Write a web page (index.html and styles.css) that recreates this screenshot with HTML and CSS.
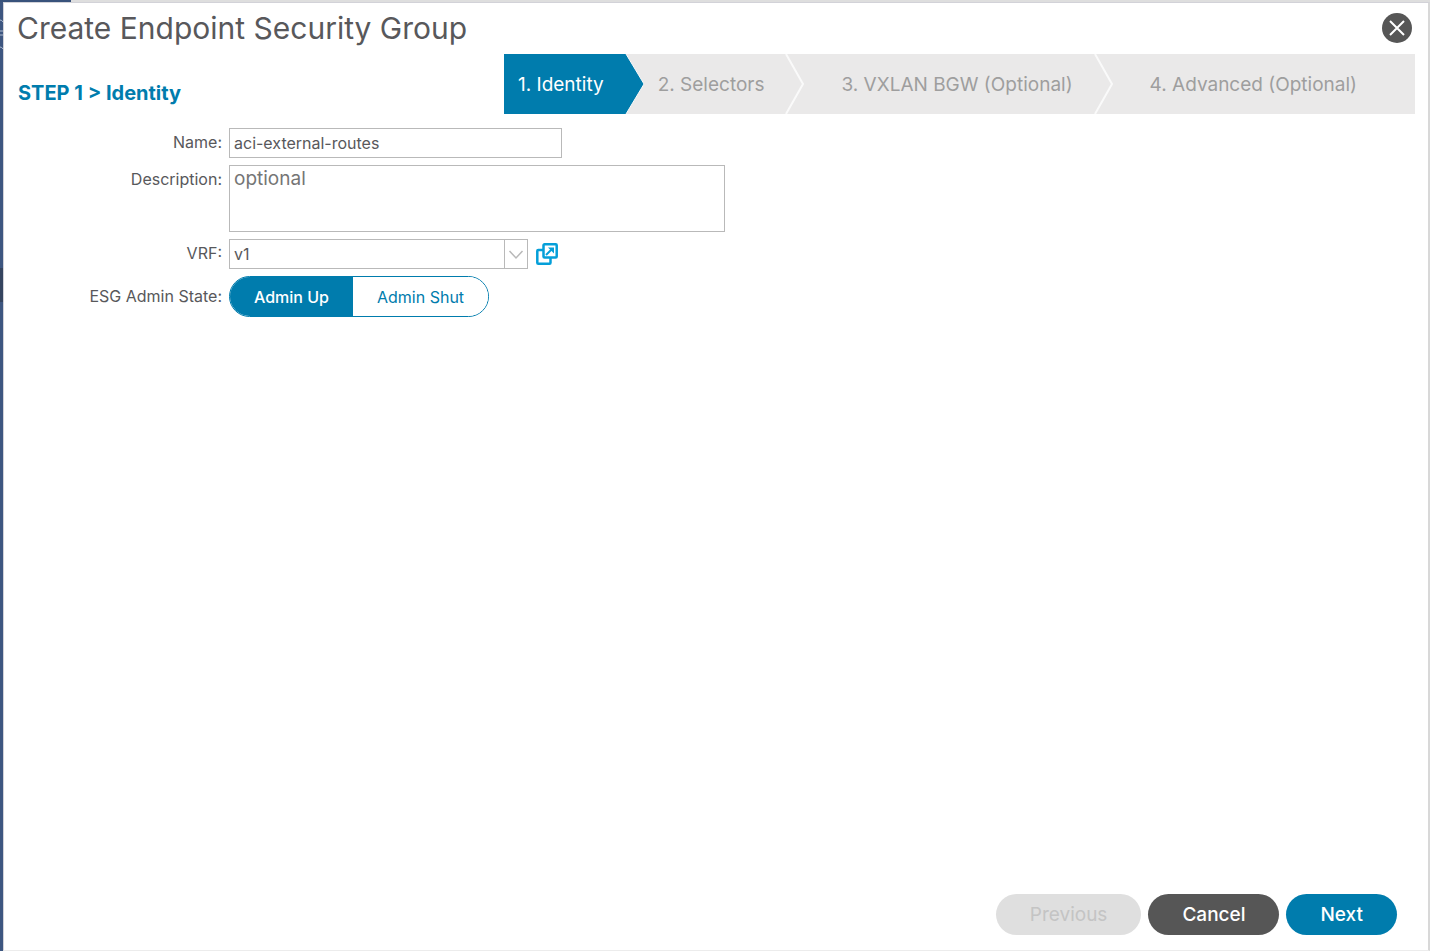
FILE: index.html
```
<!DOCTYPE html>
<html lang="en">
<head>
    <meta charset="UTF-8">
    <meta name="viewport" content="width=device-width, initial-scale=1.0">
    <title>Create Endpoint Security Group</title>
    <link rel="stylesheet" href="styles.css">
</head>
<body>
    <!-- edge of the page behind the dialog -->
    <div class="rail">
        <svg class="rail-icon" width="3" height="32" viewBox="0 0 3 32" fill="none" stroke="#aebbd0">
            <path d="M0 2 Q2 2 3 4M0 13H3M0 17H3M0 29 Q2 29 3 31"/>
        </svg>
        <div class="rail-active"></div>
    </div>

    <main class="dialog">
        <header class="title-bar">
            <h1>Create Endpoint Security Group</h1>
            <button class="close" type="button" aria-label="Close">
                <svg width="30" height="30" viewBox="0 0 30 30">
                    <circle cx="15" cy="15" r="15" fill="#565656"/>
                    <path d="M8 8L22 22M22 8L8 22" stroke="#fff" stroke-width="2"/>
                </svg>
            </button>
        </header>

        <div class="step-bar">
            <h2>STEP 1 &gt; Identity</h2>
            <ol class="steps">
                <li class="active">
                    <span>1. Identity</span>
                    <svg width="20" height="60" viewBox="0 0 20 60">
                        <path d="M0 0H2L20 30L2 60H0Z" fill="#007cad"/>
                        <path d="M2 0L20 30L2 60" fill="none" stroke="#f8f8f8"/>
                    </svg>
                </li>
                <li>
                    <span>2. Selectors</span>
                    <svg width="20" height="60" viewBox="0 0 20 60">
                        <path d="M2 0L19 30L2 60" fill="none" stroke="#fafafa" stroke-width="2"/>
                    </svg>
                </li>
                <li class="wide">
                    <span>3. VXLAN BGW (Optional)</span>
                    <svg width="20" height="60" viewBox="0 0 20 60">
                        <path d="M2 0L19 30L2 60" fill="none" stroke="#fafafa" stroke-width="2"/>
                    </svg>
                </li>
                <li class="wide last">
                    <span>4. Advanced (Optional)</span>
                </li>
            </ol>
        </div>

        <form class="identity">
            <label for="name">Name:</label>
            <input id="name" type="text" value="aci-external-routes">

            <label for="description">Description:</label>
            <textarea id="description" placeholder="optional"></textarea>

            <label for="vrf">VRF:</label>
            <div class="vrf">
                <div class="select-box">
                    <select id="vrf">
                        <option>v1</option>
                    </select>
                    <svg class="arrow" width="24" height="30" viewBox="0 0 24 30" fill="none" stroke="#b9b9b9">
                        <path d="M0.5 0V30"/>
                        <path d="M5.5 12L12 19L18.5 12" stroke-width="1.5"/>
                    </svg>
                </div>
                <a class="open-link" href="#" aria-label="Open VRF">
                    <svg width="22" height="22" viewBox="0 0 22 22" fill="none" stroke="#049fd9" stroke-width="2.5">
                        <path d="M7.5 7H2.2Q1.3 7 1.3 8V19.7Q1.3 20.7 2.3 20.7H13.5Q14.5 20.7 14.5 19.7V14.5"/>
                        <rect x="7.5" y="1.3" width="13.2" height="13.2" rx="1"/>
                        <path d="M10 12L16 6" stroke-width="2"/>
                        <path d="M12 4.5H18V10.5Z" fill="#049fd9" stroke="none"/>
                    </svg>
                </a>
            </div>

            <span class="label" id="state-label">ESG Admin State:</span>
            <div class="toggle" role="group" aria-labelledby="state-label">
                <button class="active" type="button" aria-pressed="true">Admin Up</button>
                <button type="button" aria-pressed="false">Admin Shut</button>
            </div>
        </form>

        <footer class="actions">
            <button class="previous" type="button" disabled>Previous</button>
            <button class="cancel" type="button">Cancel</button>
            <button class="next" type="button">Next</button>
        </footer>
    </main>
</body>
</html>
```

FILE: styles.css
```
*{
    margin: 0;
    padding: 0;
    box-sizing: border-box;
}

body{
    display: flex;
    min-height: 100vh;
    padding: 2px 0 0 0;
    background: linear-gradient(to right, #38527b 71px, #dedede 71px);
    color: #58585b;
    font-family: Inter, "Liberation Sans", sans-serif;
    font-size: 16px;
}

button,
input,
select,
textarea{
    font-family: inherit;
    color: inherit;
}

button{
    border: none;
    cursor: pointer;
}

svg{
    display: block;
}

.rail{
    width: 3px;
    padding-top: 16px;
    background-color: #3d5680;
}

.rail-active{
    height: 34px;
    margin-top: 218px;
    background-color: #35445f;
}

.dialog{
    flex: 1;
    display: flex;
    flex-direction: column;
    background-color: #fff;
    border: 1px solid #d2d2d8;
    border-right: 2px solid #d8d8d8;
    border-bottom-color: #ececec;
}

.title-bar{
    display: flex;
    align-items: center;
    justify-content: space-between;
    height: 50px;
    padding: 0 16px 0 13px;
}

.title-bar h1{
    font-size: 30px;
    font-weight: 400;
}

.close{
    background: none;
    border-radius: 50%;
}

.step-bar{
    display: flex;
    align-items: center;
    justify-content: space-between;
    padding: 1px 13px 0 14px;
}

.step-bar h2{
    padding-top: 18px;
    color: #007cad;
    font-size: 20px;
    font-weight: 700;
}

.steps{
    display: flex;
    list-style: none;
    background-color: #eae9e9;
    color: #9e9e9e;
    font-size: 19px;
}

.steps li{
    display: flex;
    align-items: center;
    height: 60px;
}

.steps span{
    display: flex;
    align-items: center;
    height: 100%;
    padding: 0 22px 0 14px;
}

/* the arrow laps over the end of its step */
.steps svg{
    margin-left: -2px;
}

.steps .wide span{
    padding-left: 37px;
}

.steps .last span{
    padding-right: 58px;
}

.steps .active span{
    background-color: #007cad;
    color: #fff;
}

.identity{
    display: grid;
    grid-template-columns: 218px 1fr;
    column-gap: 7px;
    row-gap: 7px;
    justify-items: start;
    padding-top: 14px;
}

.identity label,
.identity .label{
    justify-self: end;
    line-height: 29px;
}

.identity .label{
    align-self: center;
}

.identity input,
.identity textarea,
.identity select{
    padding: 0 4px;
    border: 1px solid #b9b9b9;
    border-radius: 0;
    background-color: #fff;
    font-size: 16px;
}

.identity input{
    width: 333px;
    height: 30px;
}

.identity textarea{
    width: 496px;
    height: 67px;
    font-size: 19px;
    line-height: 26px;
    resize: none;
}

.identity textarea::placeholder{
    color: #757575;
}

.vrf{
    display: flex;
    align-items: center;
    gap: 8px;
}

.select-box{
    position: relative;
}

.identity select{
    display: block;
    width: 299px;
    height: 30px;
    appearance: none;
}

.arrow{
    position: absolute;
    top: 0;
    right: 0;
    pointer-events: none;
}

.toggle{
    display: flex;
    height: 41px;
    overflow: hidden;
    border: 1px solid #007cad;
    border-radius: 21px;
}

.toggle button{
    padding: 0 24px;
    background-color: #fff;
    color: #007cad;
    font-size: 16px;
}

.toggle .active{
    background-color: #007cad;
    color: #fff;
    font-weight: 500;
}

.actions{
    display: flex;
    justify-content: flex-end;
    gap: 7px;
    margin-top: auto;
    padding: 0 31px 15px;
}

.actions button{
    height: 41px;
    padding: 0 34px;
    border-radius: 21px;
    color: #fff;
    font-size: 19px;
    font-weight: 500;
}

.actions .previous{
    background-color: #dfdfdf;
    color: #c4c4c4;
    font-weight: 400;
    cursor: default;
}

.actions .cancel{
    background-color: #565656;
}

.actions .next{
    background-color: #007cad;
}
```
